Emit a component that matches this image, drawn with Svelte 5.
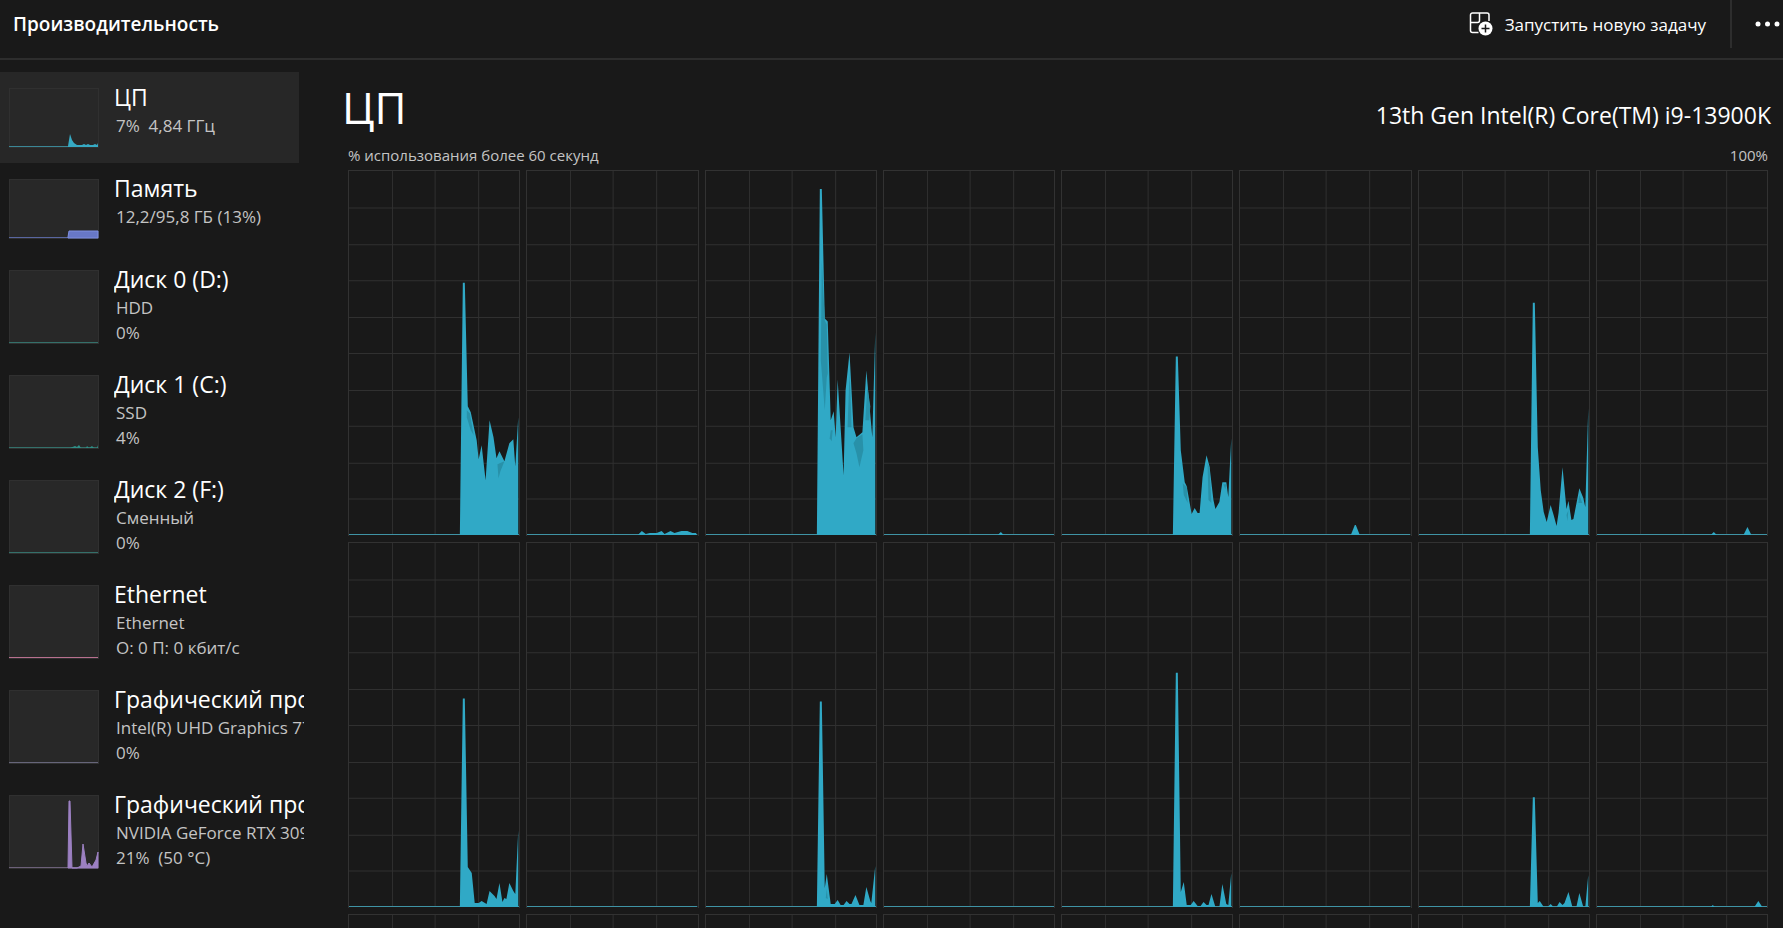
<script lang="ts">
	type Point = [number, number];
	type Core = { load?: Point[]; shade?: Point[][] };

	let selected = $state(0);

	const resources = [
		{ name: 'ЦП', lines: ['7%  4,84 ГГц'], color: 'cyan', points: [[59, 58], [61, 46], [63, 52], [65, 55], [68, 57], [73, 57], [75, 56], [77, 57], [79, 56], [81, 57], [84, 57], [86, 56], [88, 57], [89, 55]] },
		{ name: 'Память', lines: ['12,2/95,8 ГБ (13%)'], color: 'blue', points: [[59, 58], [60, 52], [89, 52]] },
		{ name: 'Диск 0 (D:)', lines: ['HDD', '0%'], color: 'green', points: [] },
		{ name: 'Диск 1 (C:)', lines: ['SSD', '4%'], color: 'green', points: [[61, 73], [66, 71], [68, 72], [70, 70], [72, 73], [77, 73], [78, 71], [80, 73], [83, 71], [85, 73], [88, 73], [89, 70]] },
		{ name: 'Диск 2 (F:)', lines: ['Сменный', '0%'], color: 'green', points: [] },
		{ name: 'Ethernet', lines: ['Ethernet', 'О: 0 П: 0 кбит/с'], color: 'pink', points: [] },
		{ name: 'Графический процессор 0', lines: ['Intel(R) UHD Graphics 770', '0%'], color: 'grey', points: [] },
		{ name: 'Графический процессор 1', lines: ['NVIDIA GeForce RTX 3090', '21%  (50 °C)'], color: 'violet', points: [[59, 73], [60, 6], [61, 6], [63, 73], [68, 73], [72, 71], [74, 49], [77, 68], [78, 71], [80, 68], [83, 72], [87, 65], [89, 57]] },
	];

	// Points are [x, y] inside a 172 x 366 cell, y measured from the top
	const cores: Core[] = [
		{
			load: [[112, 365], [115, 112], [117, 112], [120, 236], [123, 242], [129, 270], [131, 289], [134, 275], [138, 310], [142, 250], [146, 267], [149, 288], [152, 281], [157, 291], [162, 273], [166, 269], [168, 296], [171, 247]],
			shade: [[[119, 240], [122, 243], [126, 265], [123, 260], [119, 247]], [[150, 294], [157, 291], [153, 301], [151, 308]]],
		},
		{ load: [[112, 365], [116, 361], [120, 364], [124, 363], [131, 363], [136, 361], [139, 364], [145, 361], [149, 363], [156, 361], [162, 361], [167, 363], [171, 363]] },
		{
			load: [[112, 365], [115, 18], [117, 18], [120, 148], [123, 151], [126, 250], [129, 241], [131, 267], [133, 209], [139, 305], [141, 220], [145, 182], [149, 257], [152, 267], [158, 262], [162, 200], [168, 267], [171, 162]],
			shade: [[[117, 90], [116, 190], [120, 240], [122, 207], [123, 203], [122, 154], [120, 150]], [[145, 203], [143, 257], [147, 257], [146, 223]], [[152, 268], [149, 273], [152, 283], [155, 297], [159, 280], [158, 264]], [[163, 216], [161, 250], [165, 250], [166, 236]], [[126, 260], [125, 268], [127, 271], [128, 260]]],
		},
		{ load: [[115, 365], [118, 362], [121, 365]] },
		{
			load: [[112, 365], [115, 186], [117, 186], [120, 280], [124, 312], [126, 316], [129, 333], [131, 344], [134, 338], [137, 343], [139, 343], [142, 307], [146, 285], [149, 296], [153, 330], [155, 339], [159, 332], [162, 312], [166, 312], [168, 327], [171, 268]],
			shade: [[[122, 313], [126, 317], [127, 333], [123, 325]], [[147, 293], [149, 297], [151, 333], [148, 330]], [[163, 314], [166, 314], [165, 319]]],
		},
		{ load: [[112, 365], [116, 355], [117, 355], [121, 365]] },
		{
			load: [[112, 365], [115, 132], [117, 132], [120, 277], [123, 320], [126, 342], [129, 352], [133, 335], [136, 345], [139, 356], [141, 343], [145, 297], [149, 339], [151, 331], [154, 350], [156, 349], [162, 318], [166, 328], [168, 337], [171, 238]],
			shade: [[[149, 345], [151, 340], [150, 351]], [[162, 325], [165, 333], [161, 333]]],
		},
		{ load: [[115, 365], [118, 362], [121, 365], [148, 365], [152, 357], [156, 365]] },
		{ load: [[112, 365], [115, 156], [117, 156], [120, 325], [124, 331], [127, 361], [131, 361], [134, 359], [139, 362], [142, 349], [147, 354], [149, 357], [152, 341], [155, 360], [157, 356], [159, 357], [162, 341], [166, 349], [168, 352], [171, 288]] },
		{},
		{
			load: [[112, 365], [115, 159], [117, 159], [120, 346], [122, 332], [126, 362], [130, 362], [133, 358], [136, 363], [139, 363], [142, 359], [145, 362], [147, 362], [151, 353], [155, 363], [159, 363], [162, 345], [166, 359], [167, 361], [171, 324]],
			shade: [[[122, 347], [121, 356], [123, 357]]],
		},
		{},
		{ load: [[112, 365], [115, 130], [117, 130], [120, 350], [123, 340], [126, 363], [130, 363], [133, 359], [137, 364], [140, 364], [143, 360], [146, 363], [148, 363], [151, 352], [155, 365], [159, 365], [162, 342], [166, 362], [168, 363], [171, 331]] },
		{},
		{ load: [[112, 365], [115, 255], [117, 255], [120, 361], [122, 359], [126, 365], [130, 365], [133, 362], [136, 365], [139, 365], [142, 360], [145, 363], [147, 361], [151, 350], [155, 365], [159, 365], [162, 351], [166, 365], [168, 365], [171, 333]] },
		{ load: [[115, 365], [117, 363], [119, 365], [159, 365], [163, 359], [167, 365]] },
		...Array.from({ length: 8 }, () => ({})),
	];

	const gridX = [44, 87, 131];
	const gridY = [37, 74, 110, 147, 183, 220, 256, 293, 329];

	function area(points: number[][], base: number) {
		if (!points.length) return '';
		const top = points.map(([x, y]) => `${x} ${y}`).join('L');
		return `M${points[0][0]} ${base}L${top}L${points[points.length - 1][0]} ${base}Z`;
	}

	function shape(points: number[][]) {
		return 'M' + points.map(([x, y]) => `${x} ${y}`).join('L') + 'Z';
	}
</script>

<div class="window">
	<header class="toolbar">
		<h1 class="page-title">Производительность</h1>
		<button class="new-task">
			<svg width="24" height="24" viewBox="0 0 24 24" fill="none" aria-hidden="true">
				<path d="M9.500 20.500H3.500A2 2 0 0 1 1.500 18.500V3A2 2 0 0 1 3.500 1H18A2 2 0 0 1 20 3V9M10.500 1V8.500A2 2 0 0 1 8.500 10.500H1.500" stroke="#fff" stroke-width="1.500" />
				<circle cx="16.500" cy="16.500" r="7" fill="#fff" />
				<path d="M16.500 12.500V20.500M12.500 16.500H20.500" stroke="#191919" stroke-width="1.500" />
			</svg>
			<span>Запустить новую задачу</span>
		</button>
		<button class="more" aria-label="Дополнительно">
			<svg width="26" height="6" viewBox="0 0 26 6" fill="#fff" aria-hidden="true">
				<circle cx="3" cy="3" r="2.500" /><circle cx="12.500" cy="3" r="2.500" /><circle cx="22" cy="3" r="2.500" />
			</svg>
		</button>
	</header>

	<div class="content">
		<nav class="resources">
			{#each resources as r, i}
				{@const h = r.lines.length > 1 ? 74 : 60}
				<button class="resource" class:selected={selected === i} onclick={() => (selected = i)}>
					<svg class="mini {r.color}" width="90" height={h} viewBox="0 0 90 {h}" aria-hidden="true">
						<rect class="frame" x="0.500" y="0.500" width="89" height={h - 1} />
						<path class="base" d="M0 {h - 1.5}H89" />
						<path class="area" d={area(r.points, h - 1)} />
					</svg>
					<span class="info">
						<span class="name">{r.name}</span>
						{#each r.lines as line}
							<span class="detail">{line}</span>
						{/each}
					</span>
				</button>
			{/each}
		</nav>

		<main class="details">
			<div class="heading">
				<h2>ЦП</h2>
				<span class="model">13th Gen Intel(R) Core(TM) i9-13900K</span>
			</div>
			<div class="captions">
				<span>% использования более 60 секунд</span>
				<span>100%</span>
			</div>
			<div class="cores">
				{#each cores as core}
					<svg class="core" viewBox="0 0 172 366" preserveAspectRatio="none" aria-hidden="true">
						<g class="grid">
							{#each gridX as x}<path d="M{x} 0V364" />{/each}
							{#each gridY as y}<path d="M0 {y}H172" />{/each}
						</g>
						<path class="base" d="M0 364.500H172" />
						{#if core.load}
							<path class="load" d={area(core.load, 365)} />
						{/if}
						{#each core.shade ?? [] as s}
							<path class="shade" d={shape(s)} />
						{/each}
					</svg>
				{/each}
			</div>
		</main>
	</div>
</div>

<style>
	:global(body) { background: #191919; overflow: hidden; }
	.window { height: 100vh; overflow: hidden; background: #191919; color: #fff; font-family: "Segoe UI", "Open Sans", "Noto Sans", sans-serif; }
	button { font: inherit; color: inherit; background: none; border: 0; padding: 0; text-align: left; }

	/* Toolbar */
	.toolbar { display: flex; align-items: flex-start; height: 58px; border-bottom: 2px solid #2d2d2d; }
	.page-title { flex: 1; margin: 0; padding-left: 13px; font-size: 19px; line-height: 48px; font-weight: 600; }
	.new-task { display: flex; align-items: center; gap: 12px; height: 48px; padding-right: 24px; font-size: 17px; white-space: nowrap; }
	.more { display: flex; align-items: center; height: 48px; padding: 0 2px 0 23px; border-left: 2px solid #2d2d2d; }

	.content { display: flex; align-items: flex-start; padding-top: 12px; }

	/* Sidebar */
	.resources { flex: none; width: 299px; }
	.resource { display: flex; align-items: flex-start; gap: 15px; width: 100%; padding: 0 0 0 9px; }
	.resource.selected { background: #272727; }
	.mini { flex: none; display: block; margin: 16px 0 15px; }
	.frame { fill: #282828; stroke: #303030; }
	.mini .base { fill: none; stroke-width: 1; }
	.info { flex: none; width: 190px; padding-top: 9px; overflow: hidden; }
	.name, .detail { display: block; white-space: pre; }
	.name { font-size: 23px; line-height: 32px; }
	.detail { padding-left: 2px; font-size: 17px; line-height: 25px; color: #c4c4c4; }
	.cyan .base { stroke: #3b8796; }
	.cyan .area { fill: #36aac4; }
	.blue .base { stroke: #5966a0; }
	.blue .area { fill: #6878c6; stroke: #7f8fe0; }
	.green .base { stroke: #34706a; }
	.green .area { fill: #2f9088; }
	.pink .base { stroke: #b8708f; }
	.grey .base { stroke: #66657a; }
	.violet .base { stroke: #6c6079; }
	.violet .area { fill: #9c80c2; stroke: #9c80c2; }

	/* CPU details */
	.details { flex: 1; min-width: 0; padding: 0 15px 0 49px; }
	.heading { display: flex; justify-content: space-between; align-items: baseline; height: 72px; margin: 0 -3px 0 -6px; }
	h2 { margin: 0; font-size: 44px; line-height: 70px; font-weight: 400; }
	.model { font-size: 23px; line-height: 32px; }
	.captions { display: flex; justify-content: space-between; height: 26px; font-size: 15px; line-height: 22px; color: #c4c4c4; }
	.cores { display: grid; grid-template-columns: repeat(8, 1fr); grid-auto-rows: 366px; gap: 6px; }
	.core { display: block; box-sizing: border-box; width: 100%; height: 100%; border: solid #323232; border-width: 1px 1px 0; }
	.grid path { fill: none; stroke: #303030; stroke-width: 1; vector-effect: non-scaling-stroke; shape-rendering: crispEdges; }
	.core .base { stroke: #3f93a5; stroke-width: 1; vector-effect: non-scaling-stroke; }
	.load { fill: #30a9c6; }
	.shade { fill: #2891a9; }
</style>
